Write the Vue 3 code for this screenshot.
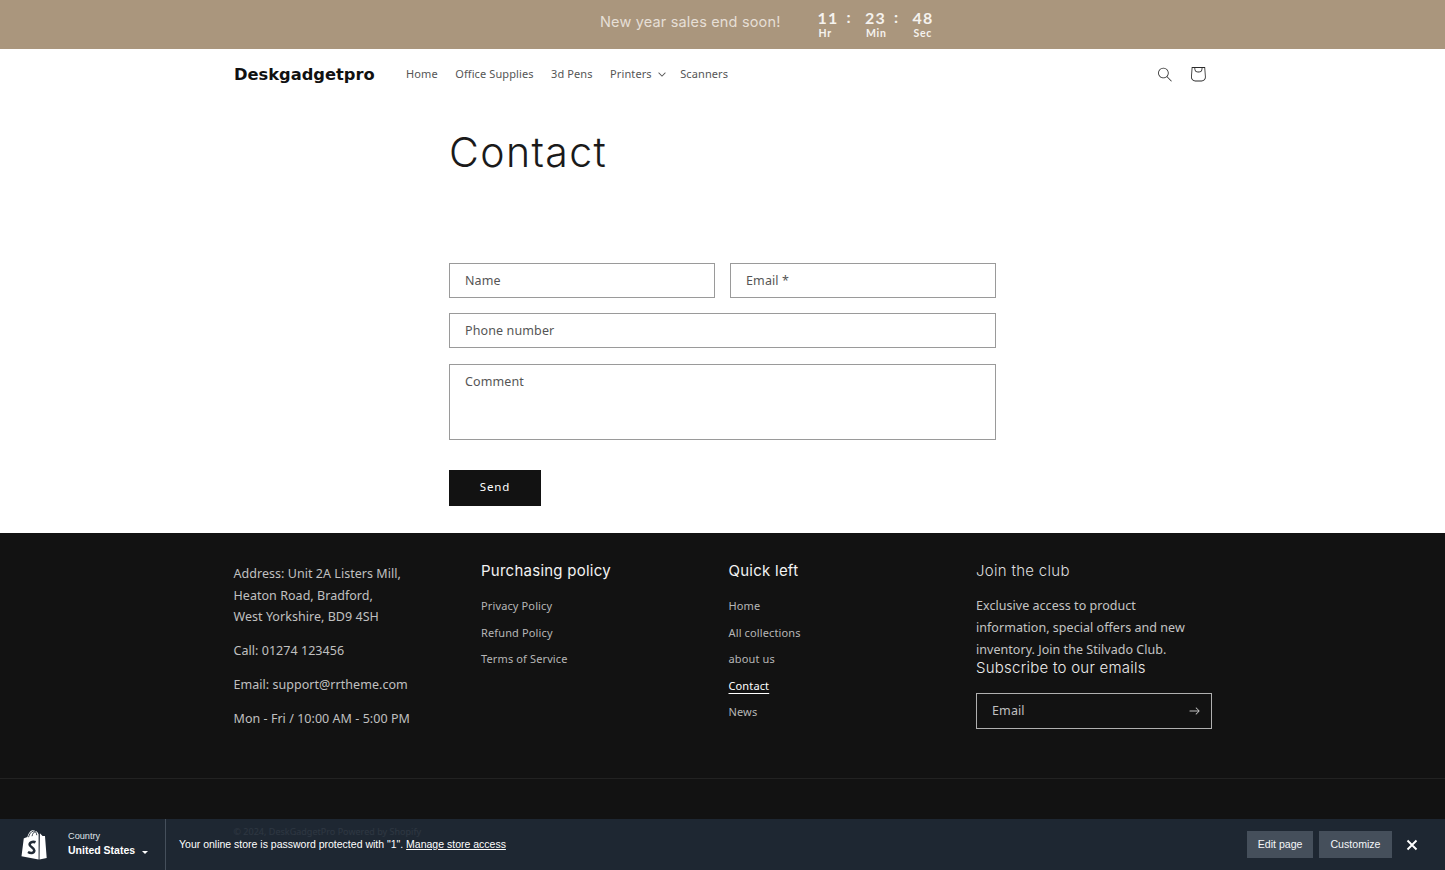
<script setup>
const policy = ['Privacy Policy', 'Refund Policy', 'Terms of Service']
const quick = ['Home', 'All collections', 'about us', 'Contact', 'News']
const nav = ['Home', 'Office Supplies', '3d Pens', 'Printers', 'Scanners']
</script>

<template>
  <div class="page">
    <div class="announce">
      <span class="sale">New year sales end soon!</span>
      <div class="timer">
        <div class="unit"><b>11</b><small>Hr</small></div>
        <span class="colon">:</span>
        <div class="unit"><b>23</b><small>Min</small></div>
        <span class="colon">:</span>
        <div class="unit"><b>48</b><small>Sec</small></div>
      </div>
    </div>

    <header class="header">
      <div class="logo">Deskgadgetpro</div>
      <nav class="nav">
        <a v-for="item in nav" :key="item" class="nav-link">
          {{ item }}
          <svg v-if="item === 'Printers'" class="caret" viewBox="0 0 10 6"><path fill="currentColor" d="M9.354.646a.5.5 0 00-.708 0L5 4.293 1.354.646a.5.5 0 00-.708.708l4 4a.5.5 0 00.708 0l4-4a.5.5 0 000-.708z"/></svg>
        </a>
      </nav>
      <div class="header-icons">
        <svg class="search" viewBox="0 0 18 19"><path fill="#2a2a2a" fill-rule="evenodd" d="M11.03 11.68A5.784 5.784 0 112.85 3.5a5.784 5.784 0 018.18 8.18zm.26 1.12a6.78 6.78 0 11.72-.7l5.4 5.4a.5.5 0 11-.71.7l-5.41-5.4z"/></svg>
        <svg class="cart" viewBox="0 0 40 40"><path fill="#2a2a2a" fill-rule="evenodd" d="M15.75 11.8h-3.16l-.77 11.6a5 5 0 0 0 4.99 5.34h7.38a5 5 0 0 0 4.99-5.33L28.4 11.8zm0 1h-2.22l-.71 10.67a4 4 0 0 0 3.99 4.27h7.38a4 4 0 0 0 4-4.27l-.72-10.67h-2.22v.63a4.75 4.75 0 1 1-9.5 0zm8.5 0h-7.5v.63a3.75 3.75 0 1 0 7.5 0z"/></svg>
      </div>
    </header>

    <main class="main">
      <h1 class="title">Contact</h1>
      <form class="form" @submit.prevent>
        <div class="row">
          <div class="field">Name</div>
          <div class="field">Email *</div>
        </div>
        <div class="field">Phone number</div>
        <div class="field area">Comment</div>
        <button class="send" type="button">Send</button>
      </form>
    </main>

    <footer class="footer">
      <div class="grid">
        <div class="col info">
          <p>Address: Unit 2A Listers Mill,<br>Heaton Road, Bradford,<br>West Yorkshire, BD9 4SH</p>
          <p>Call: 01274 123456</p>
          <p>Email: support@rrtheme.com</p>
          <p>Mon - Fri / 10:00 AM - 5:00 PM</p>
        </div>
        <div class="col">
          <h2 class="foot-head">Purchasing policy</h2>
          <ul class="links">
            <li v-for="l in policy" :key="l"><a>{{ l }}</a></li>
          </ul>
        </div>
        <div class="col">
          <h2 class="foot-head">Quick left</h2>
          <ul class="links">
            <li v-for="l in quick" :key="l"><a :class="{ current: l === 'Contact' }">{{ l }}</a></li>
          </ul>
        </div>
        <div class="col">
          <h2 class="foot-head thin">Join the club</h2>
          <p class="join">Exclusive access to product information, special offers and new inventory. Join the Stilvado Club.</p>
          <h3 class="subscribe">Subscribe to our emails</h3>
          <div class="email">
            <span>Email</span>
            <svg class="arrow" viewBox="0 0 14 10"><path fill="currentColor" fill-rule="evenodd" d="M8.537.808a.5.5 0 01.817-.162l4 4a.5.5 0 010 .708l-4 4a.5.5 0 11-.708-.708L11.793 5.5H1a.5.5 0 010-1h10.793L8.646 1.354a.5.5 0 01-.109-.546z"/></svg>
          </div>
        </div>
      </div>
      <div class="foot-line"></div>
      <div class="copyright">© 2024, DeskGadgetPro Powered by Shopify</div>
    </footer>

    <div class="admin">
      <svg class="bag" viewBox="0 0 26 30">
        <path fill="#fff" d="M18.6 3.6 17.3 4c-.5-1.6-1.4-3-3-3h-.2C13.7.4 13.1 0 12.6 0 8.8 0 7 4.7 6.4 7.1L3.7 8c-.8.2-.9.3-1 1.1L.5 26.3 17.6 29.5V3.7zM25.7 27.9 18.5 29.5 18.9 3.6c.2 0 .4.1.5.1l2.2 2.2 2.2.2c.1 0 .2.1.2.2z"/>
        <path fill="none" stroke="#212b36" stroke-width=".9" d="M7.5 7.2C8.2 4.5 10 1.2 12.8.9 14.4.9 15.5 2.6 15.8 5.2M11 6.2C11.6 3.5 12.8 2 14.2 1.7"/>
        <path fill="none" stroke="#212b36" stroke-width="2.6" d="M14.5 12.3C13 11.6 9 11.5 8.6 14.5 8.3 17 13.5 17.6 13.3 20.5 13.1 23.5 9.5 23.5 7 22"/>
      </svg>
      <div class="country">
        <span>Country</span>
        <strong>United States <i class="tri"></i></strong>
      </div>
      <div class="divider"></div>
      <div class="message">Your online store is password protected with "1". <u>Manage store access</u></div>
      <div class="actions">
        <button class="admin-btn" type="button">Edit page</button>
        <button class="admin-btn" type="button">Customize</button>
        <svg class="close" viewBox="0 0 12 12"><path stroke="#fff" stroke-width="1.9" d="M1.5 1.5 10.5 10.5M10.5 1.5 1.5 10.5"/></svg>
      </div>
    </div>
  </div>
</template>

<style>
html, body { margin: 0; padding: 0; background: #fff; overflow: hidden; }
</style>

<style scoped>
.page {
  position: relative;
  width: 1445px;
  height: 870px;
  overflow: hidden;
  font-family: "Noto Sans", sans-serif;
  color: #121212;
}
.announce {
  height: 49px;
  background: #aa967d;
  display: flex;
  align-items: center;
  box-sizing: border-box;
  padding-left: 600px;
  gap: 38px;
}
.sale {
  font-family: Inter, sans-serif;
  font-size: 14.5px;
  letter-spacing: .17px;
  color: #e6dfd6;
  margin-top: -7px;
}
.timer { display: flex; align-items: flex-start; color: #f5f2ee; font-family: Lato, sans-serif; margin-bottom: 3px; }
.unit { display: flex; flex-direction: column; align-items: flex-start; width: 28px; }
.unit b { font-size: 16px; line-height: 20px; letter-spacing: 1.2px; font-weight: 700; margin-left: -1px; }
.unit small { font-size: 10.5px; line-height: 12px; font-weight: 700; letter-spacing: .7px; margin-top: -1px; }
.colon { font-size: 16px; font-weight: 700; line-height: 18px; width: 19.5px; text-align: left; }

.header {
  height: 51px;
  box-sizing: border-box;
  padding-bottom: 1px;
  width: 978px;
  margin: 0 auto;
  display: flex;
  align-items: center;
}
.logo {
  font-family: "DejaVu Sans", sans-serif;
  font-weight: 700;
  font-size: 16.3px;
  color: #111;
  width: 172.5px;
  padding-left: .5px;
  box-sizing: border-box;
}
.nav { display: flex; gap: 17.5px; font-size: 11px; letter-spacing: .1px; color: #555; margin-top: -1px; }
.nav-link { display: flex; align-items: center; }
.caret { width: 8px; height: 5px; margin-left: 6px; margin-top: 2px; margin-right: -3px; }
.header-icons { margin-left: auto; display: flex; align-items: center; margin-right: -3px; }
.search { width: 14px; height: 15px; margin-right: 8.5px; }
.cart { width: 34px; height: 34px; }

.main { width: 547px; margin: 0 auto; height: 433px; }
.title {
  font-family: Inter, sans-serif;
  font-weight: 300;
  font-size: 41px;
  line-height: 52px;
  letter-spacing: 1.4px;
  margin: 0;
  padding-top: 26px;
  height: 137px;
  color: #1a1a1a;
}
.form { display: flex; flex-direction: column; gap: 15.3px; }
.row { display: flex; gap: 15px; }
.row .field { flex: 1; }
.field {
  height: 35px;
  box-sizing: border-box;
  border: 1px solid #9a9a9a;
  padding: 0 15px;
  font-size: 12.5px;
  line-height: 33px;
  letter-spacing: .12px;
  color: #555;
}
.area { height: 76.4px; }
.send {
  width: 92px;
  height: 36px;
  margin-top: 14.7px;
  padding: 0 0 3px;
  border: 0;
  background: #121212;
  color: #fff;
  font: 400 11.5px "Noto Sans", sans-serif;
  letter-spacing: .9px;
}

.footer { background: #121212; height: 337px; color: #c0c0c0; position: relative; }
.grid {
  width: 978px;
  margin: 0 auto;
  padding-top: 27px;
  display: grid;
  grid-template-columns: repeat(4, 235.5px);
  gap: 12px;
}
.info { padding-top: 3px; }
.info p { margin: 0 0 12.5px; font-size: 12.5px; line-height: 21.5px; letter-spacing: .04px; }
.foot-head {
  font-family: Inter, sans-serif;
  font-size: 15px;
  line-height: 22px;
  font-weight: 400;
  letter-spacing: .25px;
  margin: 0;
  color: #f3f3f3;
}
.foot-head.thin { font-weight: 300; letter-spacing: .3px; color: #ddd; }
.links { list-style: none; margin: 11px 0 0; padding: 0; font-size: 11px; letter-spacing: .13px; color: #b6b6b6; }
.links li { height: 26.5px; line-height: 26px; }
.current { color: #fff; text-decoration: underline; text-underline-offset: 3px; }
.join { margin: 13px 0 0; font-size: 12.5px; line-height: 21.8px; letter-spacing: .04px; color: #c4c4c4; }
.subscribe {
  font-family: Inter, sans-serif;
  font-weight: 300;
  font-size: 15px;
  line-height: 16px;
  letter-spacing: .25px;
  margin: 0;
  color: #ececec;
}
.email {
  margin-top: 17px;
  height: 35.5px;
  box-sizing: border-box;
  border: 1px solid #b0b0b0;
  padding: 0 11px 2px 15px;
  display: flex;
  align-items: center;
  justify-content: space-between;
  font-size: 12.5px;
  letter-spacing: .12px;
}
.arrow { width: 11px; height: 8px; margin-top: 2px; }
.foot-line { position: absolute; top: 245px; left: 0; right: 0; height: 1px; background: #222; }
.copyright { position: absolute; left: 233.5px; top: 292px; font-size: 9px; letter-spacing: .02px; color: #aaa; }

.admin {
  position: absolute;
  left: 0;
  right: 0;
  bottom: 0;
  height: 51px;
  background: rgba(32, 42, 54, .9);
  color: #fff;
  display: flex;
  align-items: center;
  font-family: "Liberation Sans", sans-serif;
}
.bag { width: 26px; height: 30px; margin-left: 21px; }
.country { margin-left: 21px; display: flex; flex-direction: column; width: 97px; margin-top: -2px; }
.country span { font-size: 9.2px; line-height: 13px; color: #dfe3e8; }
.country strong { font-size: 10.5px; line-height: 14px; }
.tri {
  display: inline-block;
  width: 0;
  height: 0;
  border: 3.5px solid transparent;
  border-top-color: #fff;
  border-bottom: 0;
  margin-left: 4px;
  vertical-align: 0;
}
.divider { width: 1px; height: 51px; background: #454f5b; }
.message { margin-left: 13px; font-size: 10.5px; margin-top: -2px; }
.actions { margin-left: auto; display: flex; align-items: center; gap: 6px; margin-right: 27px; }
.admin-btn {
  height: 27px;
  border: 0;
  background: #454f5b;
  color: #f4f6f8;
  font: 10.6px "Liberation Sans", sans-serif;
  padding: 0 11px 2px;
}
.close { width: 12px; height: 12px; margin-left: 8.5px; }
</style>
